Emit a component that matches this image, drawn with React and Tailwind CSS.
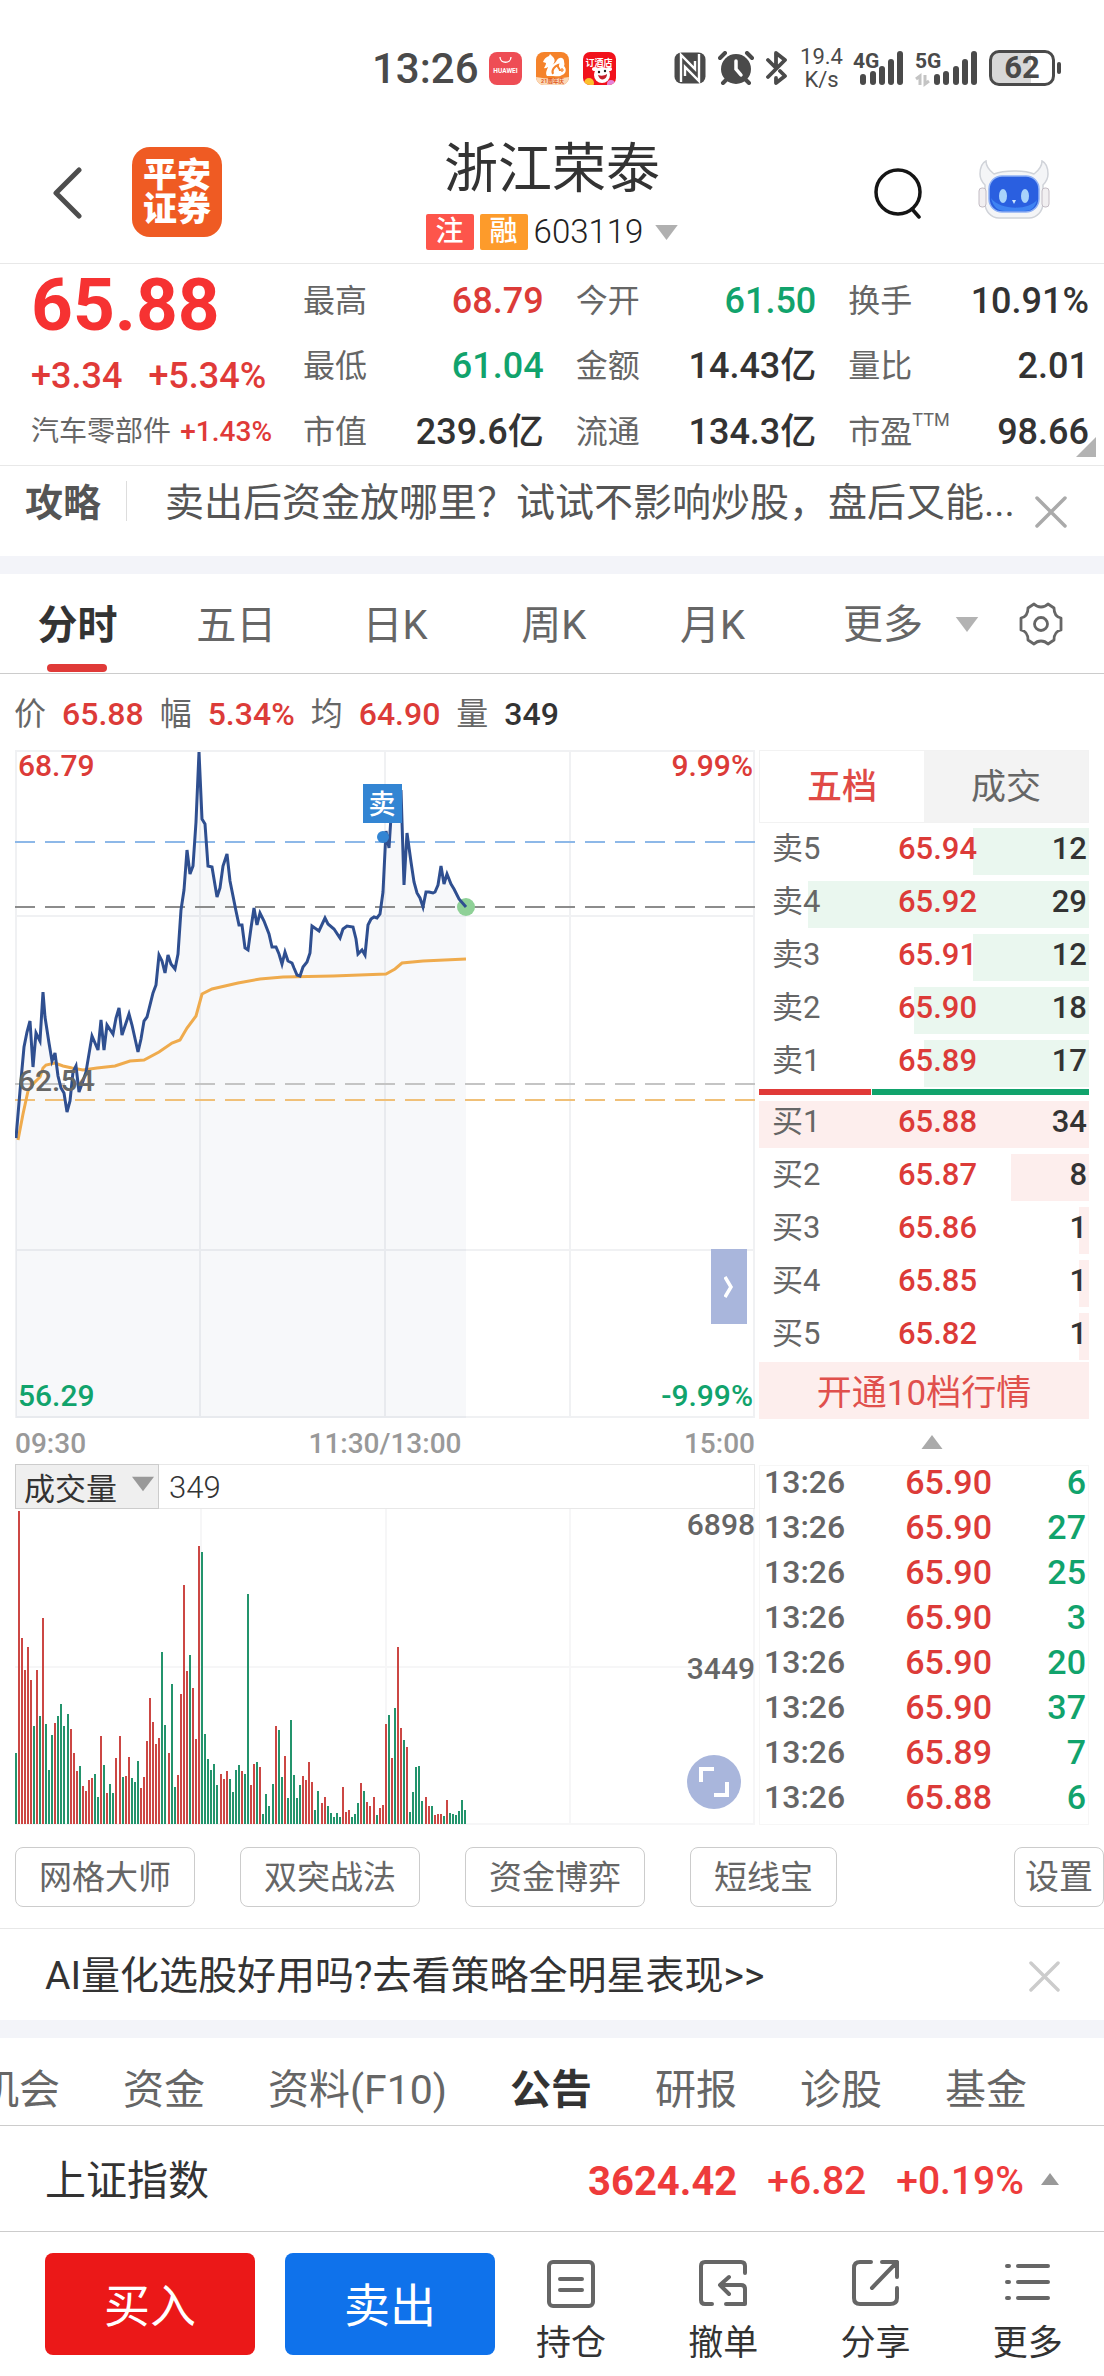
import React from "react";
import { useState } from "react";

const stats = [
  { label: "最高", value: "68.79", color: "text-[#dc3b38]" },
  { label: "今开", value: "61.50", color: "text-[#11a36c]" },
  { label: "换手", value: "10.91%", color: "text-[#333]" },
  { label: "最低", value: "61.04", color: "text-[#11a36c]" },
  { label: "金额", value: "14.43亿", color: "text-[#333]" },
  { label: "量比", value: "2.01", color: "text-[#333]" },
  { label: "市值", value: "239.6亿", color: "text-[#333]" },
  { label: "流通", value: "134.3亿", color: "text-[#333]" },
  { label: "市盈", sup: "TTM", value: "98.66", color: "text-[#333]" },
];

const sells = [
  ["卖5", "65.94", 12],
  ["卖4", "65.92", 29],
  ["卖3", "65.91", 12],
  ["卖2", "65.90", 18],
  ["卖1", "65.89", 17],
];

const buys = [
  ["买1", "65.88", 34],
  ["买2", "65.87", 8],
  ["买3", "65.86", 1],
  ["买4", "65.85", 1],
  ["买5", "65.82", 1],
];

const trades = [
  ["13:26", "65.90", 6],
  ["13:26", "65.90", 27],
  ["13:26", "65.90", 25],
  ["13:26", "65.90", 3],
  ["13:26", "65.90", 20],
  ["13:26", "65.90", 37],
  ["13:26", "65.89", 7],
  ["13:26", "65.88", 6],
];

const priceLine =
  "1,388 5,341 9,297 12,282 15,271 18,317 21,283 25,291 28,242 30,267 34,293 37,311 40,303 43,326 46,338 49,343 52,362 55,351 58,322 61,316 64,342 68,331 71,322 77,286 83,300 86,270 89,300 92,275 98,284 101,268 104,258 107,285 114,264 117,275 123,302 126,289 129,271 132,267 138,243 141,235 144,205 147,211 150,223 153,205 156,214 160,219 163,204 166,160 169,140 172,100 175,124 178,116 181,72 184,2 187,69 190,74 193,116 197,117 202,147 205,138 208,116 212,104 215,131 221,161 224,175 227,175 230,198 233,200 236,178 239,158 242,175 245,163 249,171 254,184 257,197 261,197 264,204 267,214 270,202 273,211 277,213 279,218 282,225 285,226 288,217 292,212 295,203 297,176 304,181 310,168 313,174 319,179 325,188 328,179 332,176 338,177 341,189 343,204 347,200 350,205 353,175 356,169 359,167 362,168 365,164 368,142 371,81 374,98 376,67 379,55 386,40 389,135 392,83 396,112 399,132 402,143 405,148 408,157 411,142 414,142 418,143 420,142 423,135 426,116 429,134 432,124 436,134 439,139 444,149 451,157";

const averageLine =
  "3,390 8,364 13,341 18,334 25,327 28,318 31,315 40,313 48,316 57,318 68,320 82,318 100,316 115,311 129,310 144,302 157,293 165,290 172,278 181,266 187,244 197,239 223,233 245,229 268,227 318,226 371,224 380,219 387,213 408,211 451,209";

// positive = up (red), negative = down (green)
const volumes = [
  -71, 313, 186, 154, 177, 144, -98, 154, -108, 206, -100, -54, -89, 101, -108,
  -120, -98, -110, 95, 71, 53, -58, 38, 33, 44, 46, -50, -27, 88, -59, 31, -40,
  -31, 66, 88, -47, 48, 67, -46, -42, -63, 36, 47, 83, 126, 102, 80, 86, -172,
  -99, 71, -140, -37, 49, 130, 239, 153, -169, 136, 85, 278, -272, -90, -65,
  -54, -60, -39, 50, 45, 53, -45, -32, -54, -59, 53, -50, -230, 39, 60, -62, 57,
  -10, -30, -18, -40, 98, -94, -47, 68, -26, -104, -49, -26, -39, 48, 44, 62,
  42, -14, -33, 21, 27, -18, -11, -7, -11, -7, 37, 12, 14, -7, -10, -21, 41,
  -33, 22, 18, 27, -9, 16, 19, 100, -109, 66, -116, 177, 96, -84, 77, -12, -32,
  -57, -58, -23, 27, 18, -18, 9, 10, 10, -8, 24, -11, -10, -9, -13, -24, -14,
];

const Triangle = ({ className }) => (
  <svg viewBox="0 0 24 16" className={className} fill="currentColor" aria-hidden="true">
    <path d="M0 0h24L12 16z" />
  </svg>
);

const Close = ({ className }) => (
  <svg viewBox="0 0 32 32" className={className} fill="none" stroke="currentColor" strokeWidth="3.5" strokeLinecap="round">
    <path d="M2 2l28 28M30 2L2 30" />
  </svg>
);

const StatusBar = () => (
  <div className="flex h-[136px] items-center pl-[372px] pr-[43px] text-[#4a4a4a]">
    <span className="text-[42px] font-medium">13:26</span>
    <svg viewBox="0 0 33 33" className="ml-2.5 size-[33px]">
      <rect width="33" height="33" rx="8" fill="#ee4d55" />
      <path d="M11 5c0 7 11 7 11 0" fill="none" stroke="#fff" strokeWidth="1.3" />
      <text x="16.5" y="21" fontSize="6.5" fontWeight="700" fill="#fff" textAnchor="middle">HUAWEI</text>
    </svg>
    <svg viewBox="0 0 33 33" className="ml-3.5 size-[33px]">
      <defs>
        <clipPath id="app2"><rect width="33" height="33" rx="8" /></clipPath>
      </defs>
      <g clipPath="url(#app2)">
        <rect width="33" height="33" fill="#f5832b" />
        <path d="M7 10c1-3 3-5 6-6l1-2 2 2c4 3 3 7 0 9 2-1 4-3 5-5 3-4 7-2 7 1 0 2 1 3 0 5 3 3 2 8-2 9-2 2-6 1-9 1h-6c-2-3 0-6 1-9-1 0-2 2-4 1 1-2 2-3 2-5-1 0-2-1-3-1z" fill="#fff" />
        <path d="M17 22c-2-4 2-8 5-9-1 3 2 3 2 6" fill="none" stroke="#f5832b" strokeWidth="2" />
        <path d="M24 18h4M26 16v4" stroke="#f5832b" strokeWidth="1.2" />
        <path d="M0 25q16 3 33 0v8H0z" fill="#fbd9b8" />
        <text x="16.5" y="31" fontSize="5.5" fontWeight="700" fill="#e0561a" textAnchor="middle">21周年庆</text>
      </g>
    </svg>
    <svg viewBox="0 0 33 33" className="ml-3.5 size-[33px]">
      <defs>
        <clipPath id="app3"><rect width="33" height="33" rx="7" /></clipPath>
      </defs>
      <g clipPath="url(#app3)">
        <rect width="33" height="33" fill="#f1121c" />
        <text x="16" y="14" fontSize="9" fontWeight="700" fill="#fff" textAnchor="middle">订酒店</text>
        <ellipse cx="19" cy="23" rx="8" ry="8" fill="#fff" />
        <ellipse cx="12" cy="17" rx="3" ry="2" fill="#fff" />
        <ellipse cx="26" cy="17" rx="3" ry="2" fill="#fff" />
        <path d="M15 23c3 1 6 1 9-1 0 6-7 8-9 1z" fill="#c3202b" />
        <circle cx="16" cy="20" r="1.2" fill="#222" />
        <circle cx="22" cy="19" r="1.2" fill="#222" />
        <circle cx="6" cy="31" r="5" fill="#fbc02d" />
        <circle cx="28" cy="32" r="4" fill="#e583d8" />
      </g>
    </svg>
    <div className="flex-1" />
    {/* nfc */}
    <svg viewBox="0 0 32 32" className="size-8">
      <rect x="0.5" y="0.5" width="31" height="31" rx="7" fill="currentColor" />
      <path d="M7 30V3L21 17V9M25 2v27L11 15v9" fill="none" stroke="#fff" strokeWidth="2.4" />
    </svg>
    {/* alarm */}
    <svg viewBox="0 0 36 34" className="ml-3 h-[34px] w-9">
      <circle cx="18" cy="18" r="15" fill="currentColor" />
      <path d="M2 7l5-5M34 7l-5-5M5 32l3-3M31 32l-3-3" stroke="currentColor" strokeWidth="4" strokeLinecap="round" />
      <path d="M18 10v8l5 6" fill="none" stroke="#fff" strokeWidth="3.5" strokeLinecap="round" />
    </svg>
    {/* bluetooth */}
    <svg viewBox="0 0 22 34" className="ml-3 h-[34px] w-[22px]" fill="none" stroke="currentColor" strokeWidth="3.8" strokeLinejoin="round" strokeLinecap="round">
      <path d="M2 9l8 8V2l9 7L2 26M14 20l5 5-9 7v-5" />
    </svg>
    <div className="ml-3 text-center text-[22px]">
      <div className="leading-[23px]">19.4</div>
      <div className="leading-[23px]">K/s</div>
    </div>
    <svg viewBox="0 -7 50 48" className="ml-2.5 h-12 w-[50px]" fill="currentColor">
      <text x="0" y="17" fontSize="21" fontWeight="700">4G</text>
      <rect x="7" y="23" width="6" height="11" rx="3" />
      <rect x="17" y="20" width="6" height="14" rx="3" />
      <rect x="26" y="15" width="6" height="19" rx="3" />
      <rect x="35" y="8" width="6" height="26" rx="3" />
      <rect x="44" y="0" width="6" height="34" rx="3" />
    </svg>
    <svg viewBox="0 -7 62 48" className="ml-3 h-12 w-[62px]" fill="currentColor">
      <text x="0" y="17" fontSize="21" fontWeight="700">5G</text>
      <path d="M5 34V25l-4 3M10 24v9l4-3" fill="none" stroke="#c4c4c4" strokeWidth="3" />
      <rect x="19" y="23" width="6" height="11" rx="3" />
      <rect x="28" y="20" width="6" height="14" rx="3" />
      <rect x="38" y="15" width="6" height="19" rx="3" />
      <rect x="47" y="8" width="6" height="26" rx="3" />
      <rect x="56" y="0" width="6" height="34" rx="3" />
    </svg>
    <div className="ml-3 flex h-9 w-[66px] items-center justify-center rounded-[10px] border-[3px] border-[#4a4a4a] bg-linear-to-r from-[#d8d8d8] from-65% to-white to-65% text-[31px] font-bold">
      62
    </div>
    <div className="ml-0.5 h-3 w-1 rounded-full bg-[#4a4a4a]" />
  </div>
);

const Header = () => (
  <header className="flex h-32 border-b border-[#e8e8e8] pl-[52px] pr-[54px]">
    <div className="flex w-[178px] gap-[50px]">
      <button aria-label="返回" className="mb-[14px]">
        <svg viewBox="0 0 30 52" className="h-[52px] w-[30px]" fill="none" stroke="#4d4d4d" strokeWidth="5" strokeLinecap="round" strokeLinejoin="round">
          <path d="M27 3L4 26l23 23" />
        </svg>
      </button>
      <div className="mt-[11px] flex size-[90px] flex-col items-center justify-center rounded-[18px] bg-[#ef5b23] text-[34px] font-black text-white">
        <span className="leading-[34px]">平安</span>
        <span className="leading-[34px]">证券</span>
      </div>
    </div>
    <div className="flex flex-1 flex-col items-center">
      <h1 className="pt-0.5 text-[54px] leading-[64px] text-[#333]">浙江荣泰</h1>
      <div className="mt-3 flex h-9 items-center text-[28px] font-medium text-white">
        <span className="flex h-9 w-12 items-center justify-center rounded-xs bg-[#fd554b]">注</span>
        <span className="ml-1.5 flex h-9 w-12 items-center justify-center rounded-xs bg-[#fd9b2b]">融</span>
        <button className="flex items-center pl-1.5 text-[33px] font-light leading-9 text-[#222]">
          603119
          <Triangle className="ml-3 h-[15px] w-[23px] text-[#b0b0b0]" />
        </button>
      </div>
    </div>
    <div className="flex w-[176px] gap-[54px]">
      <button aria-label="搜索" className="mb-3.5">
        <svg viewBox="0 0 50 52" className="h-[52px] w-[50px]" fill="none" stroke="#151515" strokeWidth="3.5" strokeLinecap="round">
          <circle cx="24" cy="25" r="22" />
          <path d="M38 42l7 8" />
        </svg>
      </button>
      <button aria-label="助手" className="mb-5">
        <svg viewBox="0 0 72 60" className="h-[60px] w-[72px]">
          <path d="M2 14C2 8 4 3 8 1c0 6 4 10 8 13 10-4 30-4 40 0 4-3 8-7 8-13 4 2 6 7 6 13 0 5-2 8-5 11v18c0 8-6 15-14 15H21C13 58 7 51 7 43V25C4 22 2 19 2 14z" fill="#f4f5f7" stroke="#d0d3d9" strokeWidth="1.5" />
          <rect x="1" y="28" width="7" height="19" rx="3" fill="#f1eff1" stroke="#c3bcc4" />
          <rect x="64" y="28" width="7" height="19" rx="3" fill="#f1eff1" stroke="#c3bcc4" />
          <rect x="11" y="16" width="50" height="36" rx="13" fill="#2a5fe0" stroke="#8fb1f5" strokeWidth="1.5" />
          <path d="M13 38c8 12 37 13 46 2-2 8-6 11-13 11H27c-7 0-12-4-14-13z" fill="#3f83f2" />
          <ellipse cx="25" cy="36" rx="4" ry="7" fill="#a8d3fb" />
          <ellipse cx="47" cy="36" rx="4" ry="7" fill="#a8d3fb" />
          <path d="M34 40h4l-2 4z" fill="#cfe6fd" />
        </svg>
      </button>
    </div>
  </header>
);

const Quote = () => (
  <section className="relative flex h-[202px] border-b border-[#e8e8e8]">
    <div className="flex w-[303px] flex-col pl-[31px] font-medium">
      <div className="mt-1 h-[74px] text-[73px] font-bold leading-[74px] text-[#f63232]">65.88</div>
      <div className="mt-3.5 flex h-10 gap-[26px] text-[36px] leading-10 text-[#e03a38]">
        <span>+3.34</span>
        <span>+5.34%</span>
      </div>
      <div className="mt-[18px] flex h-9 items-center justify-between pr-[31px] text-[28px] leading-9 text-[#e03a38]">
        <span className="font-normal text-[#666]">汽车零部件</span>
        <span>+1.43%</span>
      </div>
    </div>
    <dl className="grid flex-1 grid-cols-3 gap-x-8 pr-[15px] pt-1">
      {stats.map((item) => (
        <div className="flex h-[65px] items-center justify-between" key={item.label}>
          <dt className="flex text-[32px] text-[#666]">
            {item.label}
            {item.sup && <sup className="top-0 text-[18px] leading-6">{item.sup}</sup>}
          </dt>
          <dd className={`text-[36px] font-medium ${item.color}`}>{item.value}</dd>
        </div>
      ))}
    </dl>
    <svg viewBox="0 0 20 20" className="absolute bottom-2 right-2 size-5">
      <path d="M20 0v20H0z" fill="#b3b3b3" />
    </svg>
  </section>
);

const PriceChart = () => (
  <div className="relative">
    <svg viewBox="0 0 740 668" className="block w-full">
      <g fill="none" stroke="#f0f1f3" strokeWidth="2">
        <path d="M1 1H739V667H1zM185 1V667M370 1V667M555 1V667M1 166H739M1 500H739" />
      </g>
      <polygon points={`${priceLine} 451,668 1,668`} fill="#3c6496" fillOpacity="0.045" />
      <g fill="none" strokeWidth="2" strokeDasharray="20 10">
        <path d="M0 92H740" stroke="#8db8e8" />
        <path d="M0 157H740" stroke="#8c8c8c" />
        <path d="M0 334H740" stroke="#c4c4c4" />
        <path d="M0 350H740" stroke="#f0c078" />
      </g>
      <circle cx="451" cy="157" r="9" fill="#8fd197" />
      <polyline points={averageLine} fill="none" stroke="#efab4d" strokeWidth="3" />
      <polyline points={priceLine} fill="none" stroke="#2f4f90" strokeWidth="3" />
      <circle cx="368" cy="87" r="6" fill="#3385d3" />
      <rect x="348" y="34" width="39" height="39" fill="#3385d3" />
      <text x="367" y="64" fontSize="27" fontWeight="500" fill="#fff" textAnchor="middle">卖</text>
    </svg>
    <div className="absolute inset-y-0 left-[3px] flex flex-col justify-between text-[30px] font-medium leading-8">
      <span className="text-[#dc3b38]">68.79</span>
      <span className="text-[#666]">62.54</span>
      <span className="mb-1.5 text-[#11a36c]">56.29</span>
    </div>
    <div className="absolute inset-y-0 right-0.5 flex flex-col items-end justify-between text-[30px] font-medium leading-8">
      <span className="text-[#dc3b38]">9.99%</span>
      <span className="mb-1.5 text-[#11a36c]">-9.99%</span>
    </div>
    <button aria-label="收起" className="absolute bottom-[94px] right-2 flex h-[75px] w-9 items-center justify-center bg-[#a9b6dc]">
      <svg viewBox="0 0 10 22" className="h-[22px] w-2.5" fill="none" stroke="#fff" strokeWidth="3.5">
        <path d="M1 1l6 10-6 10" />
      </svg>
    </button>
  </div>
);

const VolumeChart = () => (
  <div>
    <div className="flex h-[45px] items-center border border-[#e8e8e8] text-[31px] text-[#333]">
      <div className="relative -ml-px flex h-[45px] w-36 items-center border border-[#ccc] bg-[#efefef]">
        <select aria-label="指标" className="size-full appearance-none pl-2 pt-0.5">
          <option>成交量</option>
        </select>
        <Triangle className="pointer-events-none absolute right-1 top-2.5 h-[18px] w-[22px] text-[#999]" />
      </div>
      <span className="ml-2.5 pt-1 font-light">349</span>
    </div>
    <div className="relative">
      <svg viewBox="0 0 740 316" className="block w-full">
        <path d="M0 158H740M186 0V316M371 0V316M555 0V316M739 0V316M0 315H740" stroke="#f6f6f7" strokeWidth="2" />
        {volumes.map((v, i) => (
          <rect
            key={i}
            x={Math.floor(i * 3.06)}
            y={315 - Math.abs(v)}
            width="2"
            height={Math.abs(v)}
            fill={v > 0 ? "#cc4744" : "#23946c"}
          />
        ))}
      </svg>
      <div className="absolute inset-0 text-right text-[30px] font-medium leading-8 text-[#666]">
        <div>6898</div>
        <div className="mt-[112px]">3449</div>
      </div>
      <button aria-label="全屏" className="absolute bottom-4 right-3.5 flex size-[54px] items-center justify-center rounded-full bg-[#a9b6dc]">
        <svg viewBox="0 0 30 30" className="size-[30px]" fill="none" stroke="#fff" strokeWidth="4">
          <path d="M2 15V2h13M28 15v13H15" />
        </svg>
      </button>
    </div>
  </div>
);

const BookRows = ({ rows, bar }) => (
  <table className="w-full table-fixed text-[31px] font-medium leading-[41px]">
    <tbody>
      {rows.map(([label, price, count]) => (
        <tr className="relative isolate h-[53px] align-top" key={label}>
          <th scope="row" className="pl-[13px] text-left font-normal text-[#666]">
            <div
              className={`absolute right-0 top-0 -z-10 h-[47px] ${bar}`}
              style={{ width: `${(count / 34) * 100}%` }}
            />
            {label}
          </th>
          <td className="pr-0.5 text-right text-[#dc3b38]">{price}</td>
          <td className="pr-0.5 text-right text-[#333]">{count}</td>
        </tr>
      ))}
    </tbody>
  </table>
);

const OrderBook = () => (
  <div>
    <div className="grid h-[73px] grid-cols-2 border border-[#f2f2f2] text-[35px]">
      <button className="pt-1 font-medium text-[#e04a46]">五档</button>
      <button className="bg-[#f3f3f3] pt-1 text-[#666]">成交</button>
    </div>
    <div className="mt-[5px]">
      <BookRows rows={sells} bar="bg-[#eaf7ef]" />
    </div>
    <div className="-mt-1 flex h-1.5 gap-px">
      <div className="w-[34%] bg-[#e03a38]" />
      <div className="flex-1 bg-[#11a36c]" />
    </div>
    <div className="mt-1.5">
      <BookRows rows={buys} bar="bg-[#fdeeed]" />
    </div>
    <button className="-mt-1 flex h-[57px] w-full items-center justify-center bg-[#fdeeed] pt-2 text-[35px] text-[#e0504c]">
      开通10档行情
    </button>
  </div>
);

const NavItem = ({ label, children }) => (
  <button className="flex flex-col items-center gap-4 text-[35px] leading-10 text-[#333]">
    <svg viewBox="0 0 48 48" className="size-12" fill="none" stroke="#666" strokeWidth="4" strokeLinecap="round" strokeLinejoin="round">
      {children}
    </svg>
    {label}
  </button>
);

const App = () => {
  const [period, setPeriod] = useState("分时");
  const [section, setSection] = useState("公告");

  return (
    <div className="w-full overflow-hidden bg-white font-['Roboto','Noto_Sans_CJK_SC',sans-serif] text-[#333]">
      <StatusBar />
      <Header />
      <Quote />

      <div className="flex h-[90px] items-start pl-[25px] pr-[37px]">
        <span className="mt-[13px] text-[38px] font-bold leading-12 text-[#555]">攻略</span>
        <div className="ml-[25px] mt-[15px] h-10 w-px bg-[#ddd]" />
        <p className="ml-[38px] mt-[13px] flex-1 whitespace-nowrap text-[39px] leading-12 text-[#555]">
          卖出后资金放哪里？试试不影响炒股，盘后又能...
        </p>
        <button aria-label="关闭">
          <Close className="mt-[30px] size-8 text-[#aaa]" />
        </button>
      </div>
      <div className="h-[18px] bg-[#f3f4f9]" />

      <nav className="-ml-0.5 flex h-[100px] border-b border-[#ccc] text-[40px] text-[#666]">
        {["分时", "五日", "日K", "周K", "月K"].map((name) => (
          <button
            key={name}
            onClick={() => setPeriod(name)}
            className={`flex flex-1 flex-col items-center justify-end ${
              name === period ? "font-bold text-[#333]" : ""
            }`}
          >
            <span className="mb-2 leading-[60px]">{name}</span>
            <span
              className={`mb-px h-2 w-[60px] rounded-full ${
                name === period ? "bg-[#e03a38]" : ""
              }`}
            />
          </button>
        ))}
        <button className="ml-[51px] flex items-center pt-0.5">
          更多
          <Triangle className="ml-8 h-[15px] w-6 text-[#b3b3b3]" />
        </button>
        <button aria-label="图表设置" className="ml-10 mr-[41px]">
          <svg viewBox="0 0 44 44" className="size-11" fill="none" stroke="#666" strokeWidth="2.8" strokeLinejoin="round">
            <path d="M15 2c4 4 10 4 14 0l6 4c0 5 2 9 7 10v12c-5 1-7 5-7 10l-6 4c-4-4-10-4-14 0l-6-4c0-5-2-9-7-10V16c5-1 7-5 7-10z" />
            <circle cx="22" cy="22" r="6.5" />
          </svg>
        </button>
      </nav>

      <div className="flex h-[76px] items-center gap-4 pl-3.5 pt-1 text-[32px] font-medium text-[#dc3b38]">
        <span className="font-normal text-[#666]">价</span>
        <span>65.88</span>
        <span className="font-normal text-[#666]">幅</span>
        <span>5.34%</span>
        <span className="font-normal text-[#666]">均</span>
        <span>64.90</span>
        <span className="font-normal text-[#666]">量</span>
        <span className="text-[#333]">349</span>
      </div>

      <main className="flex gap-1 pl-[15px] pr-[15px]">
        <div className="flex-1">
          <PriceChart />
          <div className="flex h-[46px] items-center justify-between pt-1.5 text-[28px] font-medium text-[#999]">
            <span>09:30</span>
            <span>11:30/13:00</span>
            <span>15:00</span>
          </div>
          <VolumeChart />
        </div>
        <div className="w-[330px]">
          <OrderBook />
          <div className="flex h-[46px] items-center justify-center pl-4">
            <Triangle className="h-3.5 w-6 rotate-180 text-[#aaa]" />
          </div>
          <div className="h-[360px] border border-[#f6f6f6]">
            <table className="-mt-1.5 w-full text-[34px] font-medium">
              <tbody>
                {trades.map(([time, price, count], index) => (
                  <tr className="h-[45px] leading-[45px]" key={index}>
                    <td className="pl-1 text-[32px] text-[#666]">{time}</td>
                    <td className="text-right text-[#dc3b38]">{price}</td>
                    <td className="w-24 pr-0.5 text-right text-[#11a36c]">{count}</td>
                  </tr>
                ))}
              </tbody>
            </table>
          </div>
        </div>
      </main>

      <div className="flex h-[104px] items-center gap-[45px] border-b border-[#e8e8e8] pl-[15px] text-[33px] text-[#666]">
        {["网格大师", "双突战法", "资金博弈", "短线宝"].map((name) => (
          <button className="h-[60px] rounded-lg border border-[#ccc] px-[23px] pt-0.5" key={name}>
            {name}
          </button>
        ))}
        <button className="ml-auto h-[60px] w-[90px] rounded-lg border border-[#ccc] pt-0.5 text-[34px]">设置</button>
      </div>

      <div className="flex h-[91px] items-center justify-between pl-[45px] pr-11 pt-1">
        <a href="#strategy" className="text-[39px]">AI量化选股好用吗?去看策略全明星表现&gt;&gt;</a>
        <button aria-label="关闭">
          <Close className="size-[31px] text-[#ccc]" />
        </button>
      </div>
      <div className="h-[18px] bg-[#f3f4f9]" />

      <nav className="flex h-[88px] items-center gap-[63px] whitespace-nowrap border-b border-[#ccc] pt-[18px] text-[41px] text-[#666]">
        {["机会", "资金", "资料(F10)", "公告", "研报", "诊股", "基金"].map((name) => (
          <button
            key={name}
            onClick={() => setSection(name)}
            className={`first:-ml-[22px] ${name === section ? "font-bold text-[#333]" : ""}`}
          >
            {name}
          </button>
        ))}
      </nav>

      <div className="flex h-[106px] items-center border-b border-[#ccc] pl-[45px] pr-11 pt-1.5 text-[39px] font-medium text-[#ee3b3b]">
        <span className="flex-1 text-[41px] font-normal text-[#333]">上证指数</span>
        <span className="text-[40px] font-bold">3624.42</span>
        <span className="ml-[30px]">+6.82</span>
        <span className="ml-[30px]">+0.19%</span>
        <Triangle className="mb-1.5 ml-4 h-3 w-5 rotate-180 text-[#999]" />
      </div>

      <footer className="flex h-36 pl-[45px] pt-[21px]">
        <button className="h-[102px] w-[210px] rounded-lg bg-[#eb1818] pt-1 text-[46px] text-white">买入</button>
        <button className="ml-[30px] h-[102px] w-[210px] rounded-lg bg-[#0f72eb] pt-1 text-[46px] text-white">卖出</button>
        <div className="mt-[7px] grid flex-1 grid-cols-4">
          <NavItem label="持仓">
            <rect x="2" y="2" width="44" height="44" rx="4" />
            <path d="M13 19h22M13 30h22" />
          </NavItem>
          <NavItem label="撤单">
            <path d="M46 13V6q0-4-4-4H6Q2 2 2 6v34q0 4 4 4h7M27 44h19V29q0-4-4-4H22M30 17l-9 8 9 9" />
          </NavItem>
          <NavItem label="分享">
            <path d="M19 2H8Q2 2 2 8v30q0 6 6 6h30q7 0 7-6V28M30 2h15v15M45 2L20 28" />
          </NavItem>
          <NavItem label="更多">
            <path d="M3 6h2M14 6h30M3 22h2M14 22h30M3 38h2M14 38h30" />
          </NavItem>
        </div>
      </footer>
    </div>
  );
};

export default App;
